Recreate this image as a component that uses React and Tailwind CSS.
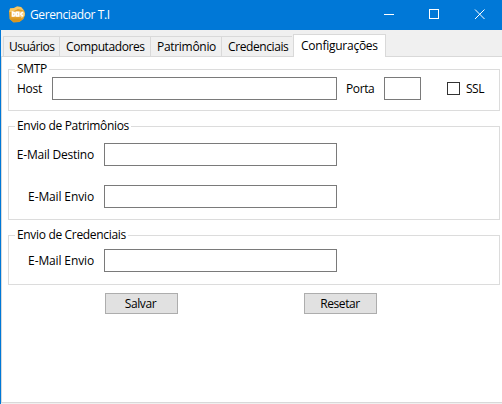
const tabs = [
  { label: "Usuários", box: "w-[56px] pl-[5px]", track: "tracking-[-0.5px]" },
  { label: "Computadores", box: "w-[91px] pl-[6px]", track: "tracking-[-0.4px]" },
  { label: "Patrimônio", box: "w-[71px] pl-[6px]", track: "tracking-[-0.3px]" },
  { label: "Credenciais", box: "w-[71px] pl-[6px]", track: "tracking-[-0.4px]" },
];

function Group({ title, className, track, children }) {
  return (
    <section className={"ml-[6px] w-[492px] border border-[#dcdcdc] " + className}>
      <h2 className={"-mt-[9px] ml-[6px] h-[16px] w-fit bg-white pl-[2px] pr-[2px] leading-[16px] " + track}>{title}</h2>
      {children}
    </section>
  );
}

function Field({ label, className, track }) {
  return (
    <label className={"flex h-[23px] items-center " + className}>
      <span className={"w-[85px] text-right leading-[23px] " + track}>{label}</span>
      <input className="ml-[10px] h-[23px] w-[233px] border border-[#7a7a7a] bg-white outline-none" />
    </label>
  );
}

function AppIcon() {
  return (
    <svg width="16" height="17" viewBox="0 0 16 17">
      <path d="M1 2.5 5 2 8 .5l4 .5 3.5 4 .5 4-1.5 4-4 3-6 .5L.5 13 0 6z" fill="#e3a02c" />
      <path d="M1 2.5 5 2 8 .5l4 .5 3 3.5L9 3 3 6H.3z" fill="#f5c766" />
      <path d="M1 12.5 4.5 16l6-.5 3.5-3z" fill="#d8951f" />
      <path d="M12 12.5 15.4 10l.4-3L14 5z" fill="#f9d680" />
      <path d="M2.5 5.5H14v5.3H2.5z" fill="#f3d091" />
      <path d="M3.5 6v4H5l1-1V7zM7.5 6.2h2.2V10H7.5zM13.7 6l-2 2 2 2.2" fill="none" stroke="#fff" strokeWidth="1.4" />
    </svg>
  );
}

export default function App() {
  return (
    <div className="flex h-[404px] w-[502px] flex-col overflow-hidden bg-[#f0f0f0] font-['Open_Sans','Noto_Sans',sans-serif] text-[12px] text-black">
      <header className="flex h-[30px] shrink-0 items-center bg-[#0078d7] text-white">
        <div className="ml-[9px] mt-[-2px]"><AppIcon /></div>
        <h1 className="ml-[5px] w-[378px] tracking-[-0.4px]">Gerenciador T.I</h1>
        <svg className="-ml-[24px]" width="110" height="30" fill="none" stroke="#fff" shapeRendering="crispEdges">
          <path d="M0 14.5h10M45.5 9.5h9v9h-9z" />
          <path d="m91 9.5 9.5 9.5m0-9.5L91 19" shapeRendering="auto" />
        </svg>
      </header>
      <div className="flex min-h-0 flex-1 flex-col border-l border-[#0078d7] pt-[4px]">
        <nav className="flex h-[22px] shrink-0 items-end pl-[2px]">
          {tabs.map((t) => (
            <div key={t.label} className={"h-[20px] border-t border-l border-[#d9d9d9] leading-[20px] whitespace-nowrap " + t.box + " " + t.track}>{t.label}</div>
          ))}
          <div className="z-10 mb-[-1px] ml-[1px] h-[23px] w-[93px] border border-b-0 border-[#d9d9d9] bg-white pl-[7px] leading-[21px] tracking-[-0.25px]">Configurações</div>
        </nav>
        <main className="h-[347px] shrink-0 border-y border-l border-[#d9d9d9] bg-white">
          <Group title="SMTP" className="mt-[12px] h-[42px]" track="tracking-[-0.3px]">
            <div className="flex h-[23px] items-center pl-[8px]">
              <span className="w-[35px] tracking-[-0.3px]">Host</span>
              <input className="h-[23px] w-[285px] border border-[#7a7a7a] outline-none" />
              <span className="ml-[9px] w-[38px] tracking-[-0.4px]">Porta</span>
              <input className="h-[23px] w-[37px] border border-[#7a7a7a] outline-none" />
              <span className="ml-[26px] h-[13px] w-[13px] border border-[#333]" />
              <span className="ml-[6px] tracking-[-0.5px]">SSL</span>
            </div>
          </Group>
          <Group title="Envio de Patrimônios" className="mt-[15px] h-[94px]" track="tracking-[-0.32px]">
            <Field label="E-Mail Destino" className="mt-[9px]" track="tracking-[-0.22px]" />
            <Field label="E-Mail Envio" className="mt-[19px]" track="tracking-[-0.13px]" />
          </Group>
          <Group title="Envio de Credenciais" className="mt-[15px] h-[50px]" track="tracking-[-0.33px]">
            <Field label="E-Mail Envio" className="mt-[6px]" track="tracking-[-0.13px]" />
          </Group>
          <div className="mt-[8px] flex gap-[126px] pl-[103px]">
            <button className="h-[21px] w-[73px] border border-[#adadad] bg-[#e1e1e1] pr-[2px] leading-[19px] tracking-[-0.4px]">Salvar</button>
            <button className="h-[21px] w-[73px] border border-[#adadad] bg-[#e1e1e1] pr-[1px] leading-[19px] tracking-[-0.4px]">Resetar</button>
          </div>
        </main>
      </div>
    </div>
  );
}
